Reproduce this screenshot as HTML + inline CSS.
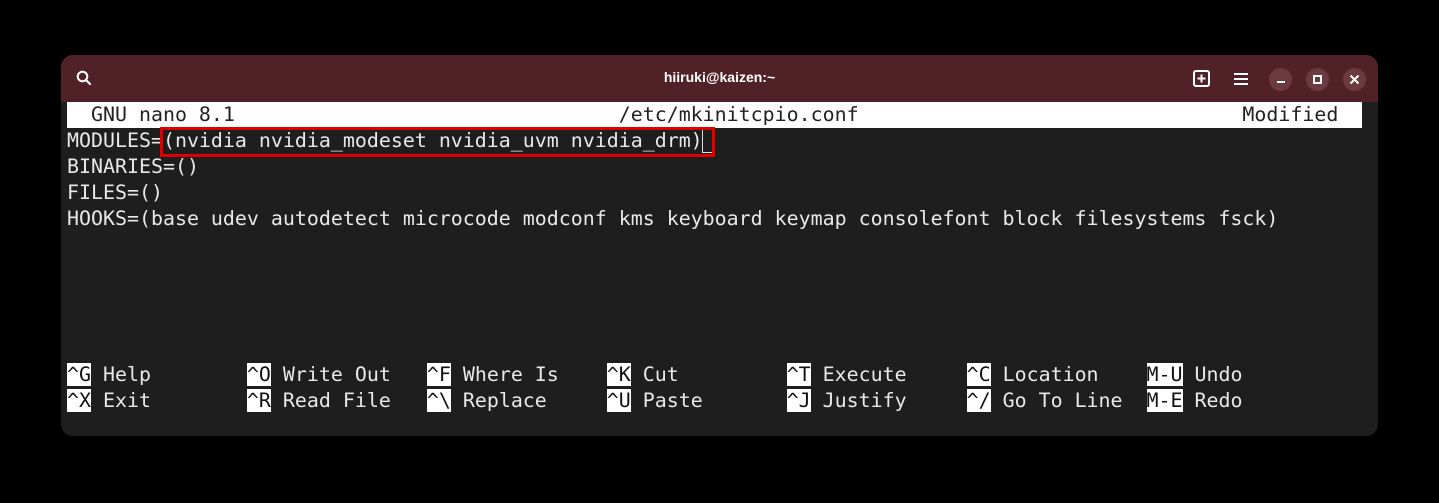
<!DOCTYPE html>
<html><head><style>
*{margin:0;padding:0;box-sizing:border-box}
html,body{width:1439px;height:503px;background:#000;overflow:hidden}
.win{position:absolute;left:61px;top:55px;width:1317px;height:381px;background:#1e1e1e;border-radius:12px;overflow:hidden}
.tb{position:absolute;left:0;top:0;width:100%;height:47px;background:#502227}
.title{position:absolute;left:0;right:0;top:14px;text-align:center;color:#fff;font:bold 14px "Liberation Sans",sans-serif}
.term{position:absolute;left:6px;top:47px;font:19.93px/26px "DejaVu Sans Mono","Liberation Mono",monospace;color:#e8e8e8}
.row{height:26px;position:relative;white-space:pre}
.hdr{background:#fff;color:#222;width:1295px}
.k{background:#fff;color:#111}
.btn{position:absolute;top:13px;width:23px;height:23px;border-radius:50%;background:#6a3a3e}
.red{position:absolute;left:99px;top:72px;width:555px;height:30px;border:3px solid #e00000}
.cur{position:absolute;left:641px;top:74px;width:12px;height:24px;border:1px solid #ddd}
</style></head><body>
<div class="win">
<div class="tb">
<svg style="position:absolute;left:15px;top:15px" width="16" height="16" viewBox="0 0 16 16"><circle cx="6.5" cy="6.5" r="4.8" fill="none" stroke="#fff" stroke-width="2"/><path d="M10 10l4 4" stroke="#fff" stroke-width="2.2" stroke-linecap="round"/></svg>
<div class="title">hiiruki@kaizen:~</div>
<svg style="position:absolute;left:1132px;top:15px" width="17" height="17" viewBox="0 0 17 17"><rect x="1" y="1" width="15" height="15" rx="2" fill="none" stroke="#fff" stroke-width="2"/><path d="M8.5 4.5v8M4.5 8.5h8" stroke="#fff" stroke-width="2"/></svg>
<svg style="position:absolute;left:1172px;top:17px" width="16" height="14" viewBox="0 0 16 14"><path d="M1 2h14M1 7h14M1 12h14" stroke="#fff" stroke-width="2"/></svg>
<div class="btn" style="left:1208px"><div style="position:absolute;left:8px;top:13px;width:8px;height:2px;background:#fff"></div></div>
<div class="btn" style="left:1245px"><div style="position:absolute;left:7px;top:7px;width:9px;height:9px;border:2px solid #fff"></div></div>
<div class="btn" style="left:1282px"><svg style="position:absolute;left:6px;top:6px" width="11" height="11"><path d="M1.5 1.5l8 8M9.5 1.5l-8 8" stroke="#fff" stroke-width="2"/></svg></div>
</div>
<div class="term"><div class="row hdr">  GNU nano 8.1                                /etc/mkinitcpio.conf                                Modified</div><div class="row">MODULES=(nvidia nvidia_modeset nvidia_uvm nvidia_drm)</div><div class="row">BINARIES=()</div><div class="row">FILES=()</div><div class="row">HOOKS=(base udev autodetect microcode modconf kms keyboard keymap consolefont block filesystems fsck)</div><div class="row"></div><div class="row"></div><div class="row"></div><div class="row"></div><div class="row"></div><div class="row"><span class="k">^G</span> Help        <span class="k">^O</span> Write Out   <span class="k">^F</span> Where Is    <span class="k">^K</span> Cut         <span class="k">^T</span> Execute     <span class="k">^C</span> Location    <span class="k">M-U</span> Undo</div><div class="row"><span class="k">^X</span> Exit        <span class="k">^R</span> Read File   <span class="k">^\</span> Replace     <span class="k">^U</span> Paste       <span class="k">^J</span> Justify     <span class="k">^/</span> Go To Line  <span class="k">M-E</span> Redo</div></div>
<div class="cur"></div>
<div class="red"></div>
</div>
</body></html>
